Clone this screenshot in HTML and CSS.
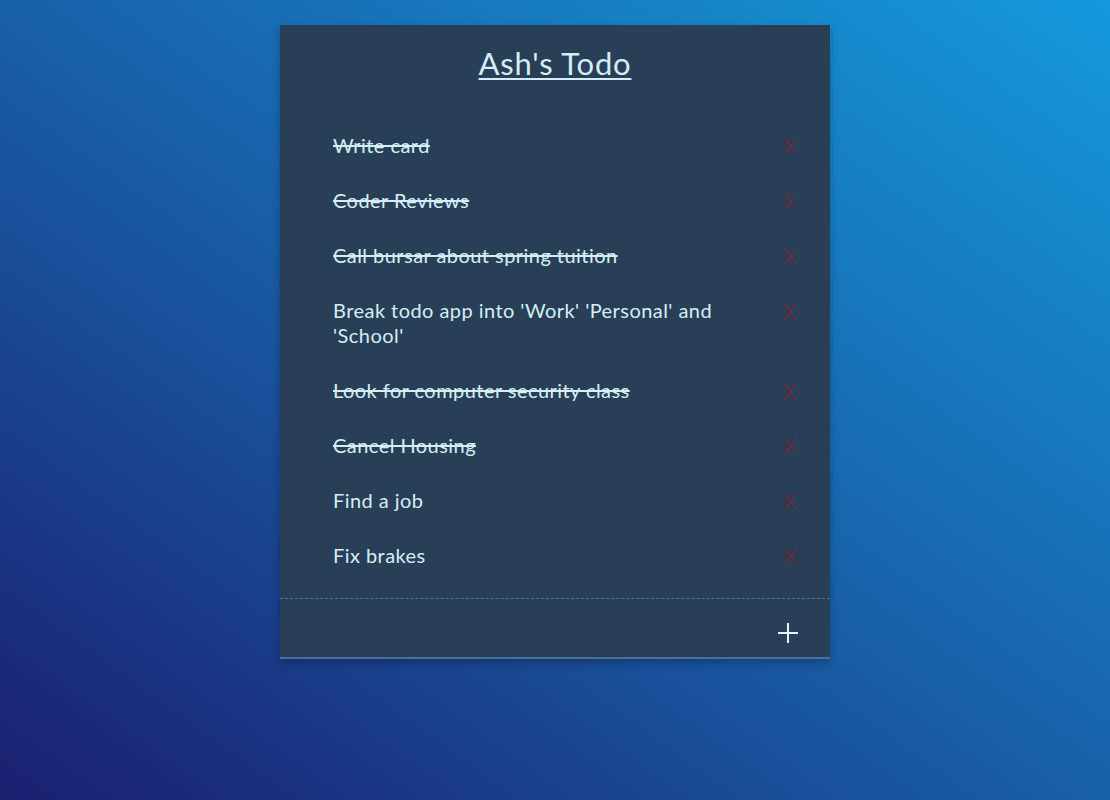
FILE: index.html
```html
<!DOCTYPE html>
<html lang="en">
<head>
<meta charset="utf-8">
<title>Ash's Todo</title>
<link rel="stylesheet" href="styles.css">
</head>
<body>
<main class="card">
  <h1 class="title">Ash's Todo</h1>
  <ul class="list">
    <li class="item done"><span class="text">Write card</span><button class="del">X</button></li>
    <li class="item done"><span class="text">Coder Reviews</span><button class="del">X</button></li>
    <li class="item done"><span class="text">Call bursar about spring tuition</span><button class="del">X</button></li>
    <li class="item"><span class="text">Break todo app into 'Work' 'Personal' and 'School'</span><button class="del">X</button></li>
    <li class="item done"><span class="text">Look for computer security class</span><button class="del">X</button></li>
    <li class="item done"><span class="text">Cancel Housing</span><button class="del">X</button></li>
    <li class="item"><span class="text">Find a job</span><button class="del">X</button></li>
    <li class="item"><span class="text">Fix brakes</span><button class="del">X</button></li>
  </ul>
  <div class="footer">
    <button class="add" aria-label="Add"><span class="plus"></span></button>
  </div>
</main>
</body>
</html>
```
FILE: styles.css
```css
html, body {
  margin: 0;
  padding: 0;
  height: 100%;
}
body {
  background: linear-gradient(to top right, #1b1f70 0%, #1860a8 50%, #1599dc 100%);
  font-family: "Lato", "Noto Sans", sans-serif;
  color: #d4eef6;
  display: flex;
  justify-content: center;
  align-items: flex-start;
}
.card {
  margin-top: 25px;
  width: 550px;
  background: #293f57;
  border-bottom: 2px solid #4a6e9e;
  box-shadow: 0 4px 8px rgba(0, 0, 0, 0.25);
}
.title {
  margin: 0;
  padding: 19px 0 0;
  text-align: center;
  font-weight: 400;
  font-size: 31px;
  letter-spacing: 0.8px;
  line-height: 38px;
  text-decoration: underline;
  text-decoration-thickness: 2px;
  text-underline-offset: 3px;
}
.list {
  list-style: none;
  margin: 0;
  padding: 36px 34px 15px 53px;
  border-bottom: 1px dashed #3f79b4;
}
.item {
  display: flex;
  justify-content: space-between;
  align-items: flex-start;
  padding: 15px 0;
  font-size: 20px;
  line-height: 25px;
  letter-spacing: 0.45px;
}
.text {
  max-width: 400px;
}
.done .text {
  text-decoration: line-through;
}
.del {
  background: none;
  border: none;
  padding: 0;
  font-family: "Lato", sans-serif;
  font-weight: 300;
  font-size: 21px;
  line-height: 25px;
  color: #8e1b2b;
}
.footer {
  display: flex;
  justify-content: flex-end;
  align-items: center;
  height: 58px;
  padding-right: 32px;
}
.add {
  background: none;
  border: none;
  padding: 0;
  margin-top: 10px;
  width: 20px;
  height: 20px;
  position: relative;
}
.plus::before, .plus::after {
  content: "";
  position: absolute;
  background: #e4f6fb;
}
.plus::before {
  left: 0;
  right: 0;
  top: 9px;
  height: 2px;
}
.plus::after {
  top: 0;
  bottom: 0;
  left: 9px;
  width: 2px;
}
```
